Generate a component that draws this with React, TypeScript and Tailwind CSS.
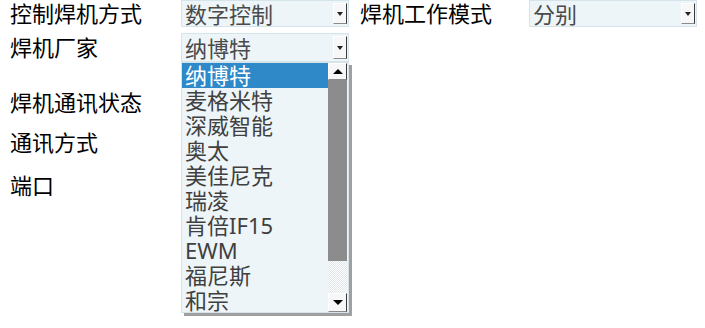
import React from 'react';

const makers = ['纳博特', '麦格米特', '深威智能', '奥太', '美佳尼克', '瑞凌', '肯倍IF15', 'EWM', '福尼斯', '和宗'];

function ArrowDown() {
  return <span className="block w-0 h-0 border-l-[3px] border-r-[3px] border-t-[4px] border-l-transparent border-r-transparent border-t-[#222]" />;
}

function Combo({ value }: { value: string }) {
  return (
    <div className="w-[168px] h-full border border-[#d5e4ea] bg-[#edf5f8] flex items-center justify-between pl-[3px] pr-[1px]">
      <span className="text-[22px] leading-none text-[#4a4a4a]">{value}</span>
      <div className="w-[14px] h-[calc(100%-4px)] bg-[#f7f7f7] border-t border-l border-white border-r border-b border-r-[#3a3a3a] border-b-[#8a8a8a] flex items-center justify-center">
        <ArrowDown />
      </div>
    </div>
  );
}

export default function App() {
  return (
    <div className="relative w-[705px] h-[328px] bg-white font-['Noto_Sans','Noto_Sans_CJK_SC',sans-serif] text-black pl-[10px] overflow-hidden">
      <div className="flex h-[27px] items-center">
        <div className="w-[171px] text-[22px] leading-[27px]">控制焊机方式</div>
        <Combo value="数字控制" />
        <div className="w-[169px] ml-[11px] text-[22px] leading-[27px]">焊机工作模式</div>
        <Combo value="分别" />
      </div>

      <div className="flex h-[29px] mt-[6px] items-center">
        <div className="w-[171px] text-[22px] leading-[29px]">焊机厂家</div>
        <Combo value="纳博特" />
      </div>

      <div className="mt-[28px] h-[25px] text-[22px] leading-[25px]">焊机通讯状态</div>
      <div className="mt-[15px] h-[25px] text-[22px] leading-[25px]">通讯方式</div>
      <div className="mt-[18px] h-[25px] text-[22px] leading-[25px]">端口</div>

      {/* open dropdown list */}
      <div className="absolute left-[181px] top-[62px] w-[168px] h-[251px] bg-[#edf5f8] border border-[#d5e4ea] shadow-[3px_3px_0_#a0a0a0] flex">
        <div className="flex-1 flex flex-col">
          {makers.map((m, i) => (
            <div
              key={m}
              className={`h-[25px] pl-[3px] text-[22px] leading-[25px] ${i === 0 ? 'bg-[#2f88c8] text-white' : 'text-[#404040]'}`}
            >
              {m}
            </div>
          ))}
        </div>
        <div className="w-[19px] flex flex-col mr-[1px]">
          <div className="h-[17px] bg-[#f7f7f7] border-t border-l border-white border-r border-b border-r-[#3a3a3a] border-b-[#8a8a8a] flex items-center justify-center">
            <span className="block w-0 h-0 border-l-[5px] border-r-[5px] border-b-[5px] border-l-transparent border-r-transparent border-b-black" />
          </div>
          <div className="h-[181px] bg-[#8c8c8c]" />
          <div className="flex-1 bg-[repeating-conic-gradient(#ffffff_0_25%,#dfe5e8_0_50%)] bg-[length:2px_2px]" />
          <div className="h-[19px] bg-[#f7f7f7] border-t border-l border-white border-r border-b border-r-[#3a3a3a] border-b-[#8a8a8a] flex items-center justify-center">
            <span className="block w-0 h-0 border-l-[5px] border-r-[5px] border-t-[5px] border-l-transparent border-r-transparent border-t-black" />
          </div>
        </div>
      </div>
    </div>
  );
}
